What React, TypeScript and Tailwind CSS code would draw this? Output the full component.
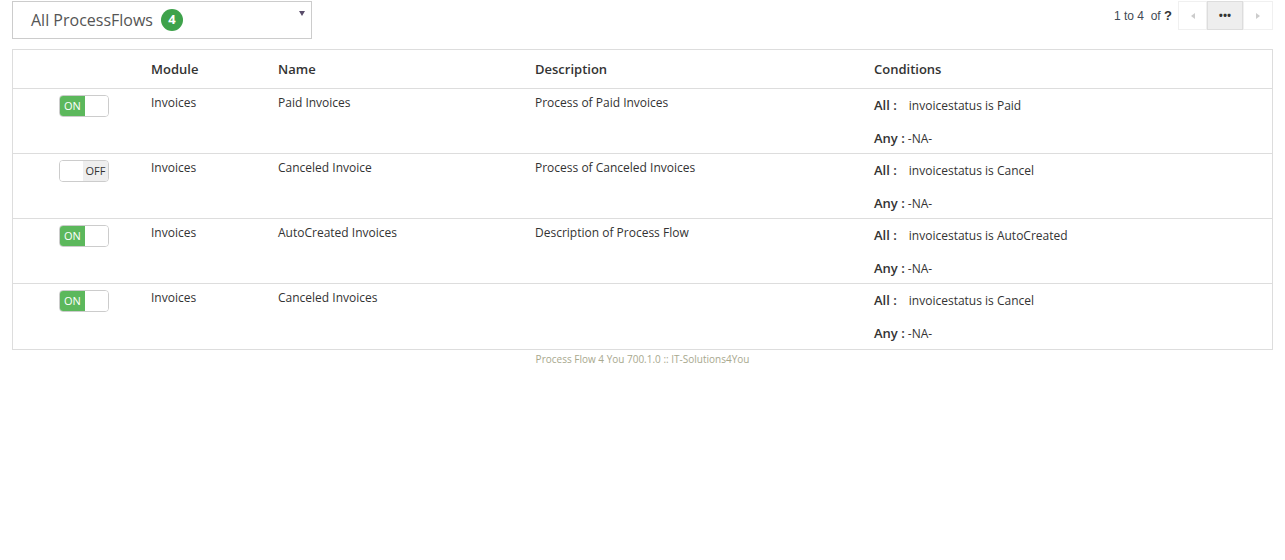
import React from 'react';

type Flow = {
  on: boolean;
  module: string;
  name: string;
  description: string;
  all: string;
};

const flows: Flow[] = [
  { on: true, module: 'Invoices', name: 'Paid Invoices', description: 'Process of Paid Invoices', all: 'invoicestatus is Paid' },
  { on: false, module: 'Invoices', name: 'Canceled Invoice', description: 'Process of Canceled Invoices', all: 'invoicestatus is Cancel' },
  { on: true, module: 'Invoices', name: 'AutoCreated Invoices', description: 'Description of Process Flow', all: 'invoicestatus is AutoCreated' },
  { on: true, module: 'Invoices', name: 'Canceled Invoices', description: '', all: 'invoicestatus is Cancel' },
];

function Toggle({ on }: { on: boolean }) {
  return (
    <div className="flex w-[50px] h-[22px] rounded-[4px] border border-[#ccc] overflow-hidden text-[11px] leading-none">
      {on ? (
        <>
          <div className="w-[25px] bg-[#5cb85c] text-white flex items-center pl-[4px]">ON</div>
          <div className="flex-1 bg-white" />
        </>
      ) : (
        <>
          <div className="flex-1 bg-white" />
          <div className="w-[25px] bg-[#eeeeee] text-[#333] flex items-center justify-center">OFF</div>
        </>
      )}
    </div>
  );
}

export default function App() {
  return (
    <div className="w-[1285px] h-[560px] bg-white text-[#333] font-['Open_Sans',sans-serif] text-[12px]">
      {/* Top bar */}
      <div className="flex items-start justify-between pl-[12px] pr-[12px] pt-[1px]">
        <div className="relative w-[300px] h-[38px] border border-[#cccccc] flex items-center pl-[18px]">
          <span className="text-[16px] text-[#555]">All ProcessFlows</span>
          <span className="ml-[8px] size-[22px] rounded-full bg-[#3ea24b] text-white text-[13px] font-bold flex items-center justify-center">4</span>
          <span className="absolute right-[6px] top-[9px] w-0 h-0 border-l-[3px] border-r-[3px] border-t-[5px] border-l-transparent border-r-transparent border-t-[#5a4d6b]" />
        </div>
        <div className="flex items-center">
          <span className="text-[12px] text-[#3f4a55] mr-[6px] font-['Liberation_Sans',Arial,sans-serif]">1 to 4&nbsp; of <b className="text-[#333] text-[13px]">?</b></span>
          <div className="flex h-[29px]">
            <div className="w-[29px] border border-[#f0f0f0] flex items-center justify-center">
              <span className="w-0 h-0 border-t-[3px] border-b-[3px] border-r-[4px] border-t-transparent border-b-transparent border-r-[#ccc]" />
            </div>
            <div className="w-[36px] border border-[#dddddd] bg-[#eeeeee] flex items-center justify-center text-[#333] font-bold text-[11px] leading-none pb-[3px]">•••</div>
            <div className="w-[30px] border border-[#f0f0f0] flex items-center justify-center">
              <span className="w-0 h-0 border-t-[3px] border-b-[3px] border-l-[4px] border-t-transparent border-b-transparent border-l-[#ccc]" />
            </div>
          </div>
        </div>
      </div>

      {/* Table */}
      <div className="mx-[12px] mt-[10px] border border-[#dddddd]">
        <table className="w-full border-collapse table-fixed">
          <colgroup>
            <col className="w-[130px]" />
            <col className="w-[127px]" />
            <col className="w-[257px]" />
            <col className="w-[339px]" />
            <col />
          </colgroup>
          <thead>
            <tr className="h-[38px] text-left text-[13px] font-semibold text-[#333]">
              <th />
              <th className="px-[8px] pt-[2px] font-semibold">Module</th>
              <th className="px-[8px] pt-[2px] font-semibold">Name</th>
              <th className="px-[8px] pt-[2px] font-semibold">Description</th>
              <th className="px-[8px] pt-[2px] font-semibold">Conditions</th>
            </tr>
          </thead>
          <tbody>
            {flows.map((f, i) => (
              <tr key={i} className={`${i === flows.length - 1 ? 'h-[66px]' : 'h-[65px]'} border-t border-[#dddddd] align-top`}>
                <td className="pl-[46px] pt-[6px]">
                  <Toggle on={f.on} />
                </td>
                <td className="px-[8px] pt-[5px] leading-[18px]">{f.module}</td>
                <td className="px-[8px] pt-[5px] leading-[18px]">{f.name}</td>
                <td className="px-[8px] pt-[5px] leading-[18px]">{f.description}</td>
                <td className="px-[8px] pt-[5px] leading-[18px]">
                  <div className="h-[35px] pt-[2px]">
                    <b className="font-semibold text-[13px]">All :</b>
                    <span className="ml-[12px]">{f.all}</span>
                  </div>
                  <div>
                    <b className="font-semibold text-[13px]">Any :</b> -NA-
                  </div>
                </td>
              </tr>
            ))}
          </tbody>
        </table>
      </div>

      <div className="text-center text-[10px] text-[#a8a88e] mt-[2px]">
        Process Flow 4 You 700.1.0 :: IT-Solutions4You
      </div>
    </div>
  );
}
